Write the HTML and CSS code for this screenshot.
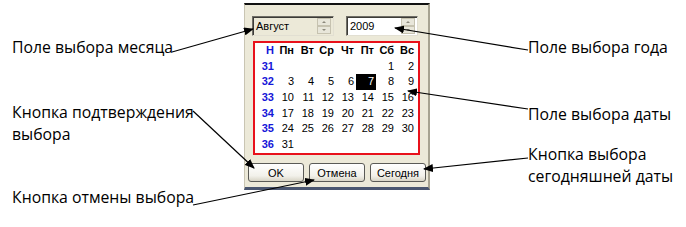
FILE: index.html
```html
<html>
<head>
    <link rel="stylesheet" href="styles.css">
</head>
<body>
    <div class="stage">
        <div class="dialog">
            <div class="combos">
                <div class="combo month">
                    <span>Август</span>
                    <div class="spin"><i class="up"></i><i class="down"></i></div>
                </div>
                <div class="combo year">
                    <span>2009</span>
                    <div class="spin"><i class="up"></i><i class="down"></i></div>
                </div>
            </div>
            <div class="calendar">
                <div class="wk">Н</div><div class="hd">Пн</div><div class="hd">Вт</div><div class="hd">Ср</div><div class="hd">Чт</div><div class="hd">Пт</div><div class="hd">Сб</div><div class="hd">Вс</div>
                <div class="wk">31</div><div></div><div></div><div></div><div></div><div></div><div>1</div><div>2</div>
                <div class="wk">32</div><div>3</div><div>4</div><div>5</div><div>6</div><div class="sel">7</div><div>8</div><div>9</div>
                <div class="wk">33</div><div>10</div><div>11</div><div>12</div><div>13</div><div>14</div><div>15</div><div>16</div>
                <div class="wk">34</div><div>17</div><div>18</div><div>19</div><div>20</div><div>21</div><div>22</div><div>23</div>
                <div class="wk">35</div><div>24</div><div>25</div><div>26</div><div>27</div><div>28</div><div>29</div><div>30</div>
                <div class="wk">36</div><div>31</div>
            </div>
            <div class="actions">
                <button class="btn">OK</button>
                <button class="btn">Отмена</button>
                <button class="btn">Сегодня</button>
            </div>
        </div>

        <div class="note" style="left: 12px; top: 36px;">Поле выбора месяца</div>
        <div class="note" style="left: 12px; top: 101px;">Кнопка подтверждения<br>выбора</div>
        <div class="note" style="left: 12px; top: 186px;">Кнопка отмены выбора</div>
        <div class="note" style="left: 528px; top: 36px;">Поле выбора года</div>
        <div class="note" style="left: 528px; top: 103px;">Поле выбора даты</div>
        <div class="note" style="left: 528px; top: 143px;">Кнопка выбора<br>сегодняшней даты</div>

        <svg class="arrows" width="686" height="227" viewBox="0 0 686 227">
            <defs>
                <marker id="head" markerWidth="10" markerHeight="8" refX="9" refY="4" orient="auto" markerUnits="userSpaceOnUse">
                    <path d="M0,0 L10,4 L0,8 z" fill="#000"/>
                </marker>
            </defs>
            <g stroke="#000" stroke-width="1.2" marker-end="url(#head)">
                <line x1="172" y1="52" x2="253" y2="29"/>
                <line x1="528" y1="50" x2="395" y2="28"/>
                <line x1="528" y1="109" x2="408" y2="91"/>
                <line x1="193" y1="111" x2="254" y2="168"/>
                <line x1="193" y1="205" x2="314" y2="180"/>
                <line x1="528" y1="158" x2="424" y2="169"/>
            </g>
        </svg>
    </div>
</body>
</html>
```

FILE: styles.css
```css
body {
    margin: 0;
    background-color: #ffffff;
}
.stage {
    position: relative;
    width: 686px;
    height: 227px;
    overflow: hidden;
}
.dialog {
    margin: 3px 0 0 244px;
    width: 183px;
    height: 182px;
    background-color: #ece9d8;
    border-top: 2px solid #111;
    border-left: 1px solid #c9c5b3;
    border-right: 2px solid #a7a391;
    border-bottom: 3px solid #4a5670;
    font-family: "Liberation Sans", Arial, sans-serif;
    font-size: 11px;
    color: #000;
}
.combos {
    display: flex;
    gap: 12px;
    padding: 11px 0 0 7px;
}
.combo {
    height: 18px;
    display: flex;
    align-items: center;
    justify-content: space-between;
    border: 1px solid;
    border-color: #6f6d66 #e2dfd2 #e2dfd2 #6f6d66;
    box-shadow: inset 1px 1px 0 #3c3b37;
}
.combo span {
    padding-left: 3px;
    line-height: 18px;
}
.month {
    width: 80px;
    background-color: #ece9d8;
}
.year {
    width: 70px;
    background-color: #ffffff;
}
.spin {
    width: 14px;
    height: 16px;
    margin-right: 2px;
    display: flex;
    flex-direction: column;
}
.spin i {
    flex: 1;
    background-color: #e8e6da;
    border: 1px solid #c6c2b0;
    position: relative;
}
.spin i::after {
    content: "";
    position: absolute;
    left: 4px;
    top: 2px;
    border-left: 2px solid transparent;
    border-right: 2px solid transparent;
}
.spin .up::after {
    border-bottom: 2px solid #8b887c;
}
.spin .down::after {
    border-top: 2px solid #8b887c;
}
.calendar {
    margin: 5px 0 0 8px;
    width: 160px;
    height: 110px;
    padding-right: 3px;
    border: 2px solid #e8111b;
    background-color: #ffffff;
    display: grid;
    grid-template-columns: 19px repeat(7, 20px);
    grid-auto-rows: 15.7px;
    line-height: 15.7px;
    text-align: right;
}
.calendar .hd {
    font-weight: bold;
}
.calendar .wk {
    font-weight: bold;
    color: #1616d8;
}
.calendar .sel {
    background-color: #000;
    color: #fff;
    margin: 0 -2px 0 2px;
    padding-right: 2px;
}
.actions {
    display: flex;
    gap: 5px;
    padding: 8px 0 0 3px;
}
.btn {
    width: 56px;
    height: 19px;
    padding: 0;
    font-family: "Liberation Sans", Arial, sans-serif;
    font-size: 11px;
    color: #000;
    background: linear-gradient(#ffffff, #f2f1ea 70%, #d8d5c6);
    border: 1px solid #5a5a56;
    border-radius: 3px;
}
.note {
    position: absolute;
    font-family: "Open Sans", sans-serif;
    font-size: 15.8px;
    line-height: 22px;
    color: #000;
    white-space: nowrap;
}
.arrows {
    position: absolute;
    left: 0;
    top: 0;
    pointer-events: none;
}
```
